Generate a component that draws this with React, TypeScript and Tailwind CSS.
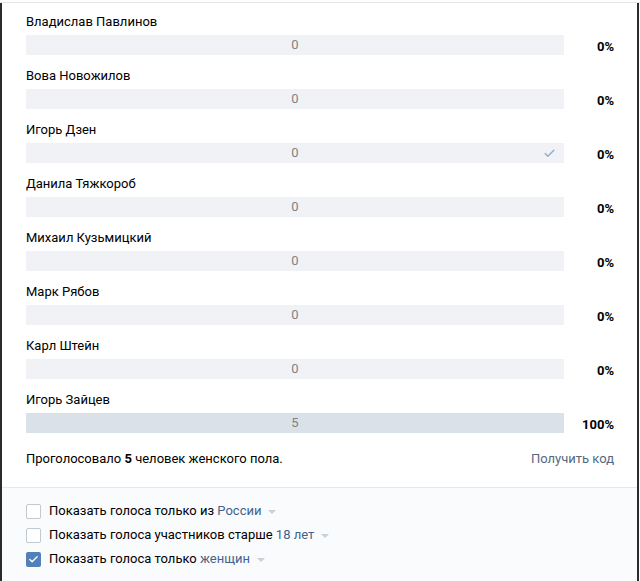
import { Check } from 'lucide-react'

const rows = [
  { name: 'Владислав Павлинов', votes: 0, pct: '0%' },
  { name: 'Вова Новожилов', votes: 0, pct: '0%' },
  { name: 'Игорь Дзен', votes: 0, pct: '0%', mine: true },
  { name: 'Данила Тяжкороб', votes: 0, pct: '0%' },
  { name: 'Михаил Кузьмицкий', votes: 0, pct: '0%' },
  { name: 'Марк Рябов', votes: 0, pct: '0%' },
  { name: 'Карл Штейн', votes: 0, pct: '0%' },
  { name: 'Игорь Зайцев', votes: 5, pct: '100%' },
]

const filters = [
  { pre: 'Показать голоса только из ', link: 'России', checked: false },
  { pre: 'Показать голоса участников старше ', link: '18 лет', checked: false },
  { pre: 'Показать голоса только ', link: 'женщин', checked: true },
]

function Caret() {
  return <span className="ml-[7px] inline-block w-0 h-0 border-x-[4px] border-x-transparent border-t-[4px] border-t-[#c5d0db] align-middle" />
}

export default function App() {
  return (
    <div className="w-[640px] h-[581px] bg-white text-[13px] text-black overflow-hidden" style={{ fontFamily: 'Roboto, "Open Sans", sans-serif' }}>
      <div className="h-[2px]" />
      <div className="h-px bg-[#e3e5e9]" />
      <div className="w-[639px] h-[578px] border-l-2 border-r-2 border-[#2b2b2b] flex flex-col">
        <div className="pl-[24px] pr-[23px] pt-[11px]">
          {rows.map((r, i) => (
            <div key={i} className="h-[54px]">
              <div className="h-4 leading-4">{r.name}</div>
              <div className="flex h-5 mt-[5px]">
                <div className={`relative w-[538px] h-5 flex items-center justify-center ${r.votes > 0 ? 'bg-[#dae1e8]' : 'bg-[#f0f2f5]'}`}>
                  <span className="text-[#828282] leading-5">{r.votes}</span>
                  {r.mine && (
                    <Check className="absolute right-[8px] top-[4px] w-[13px] h-[13px] text-[#8fadc8]" strokeWidth={2.5} />
                  )}
                </div>
                <div className="flex-1 text-right font-bold leading-4 pt-[4px]">{r.pct}</div>
              </div>
            </div>
          ))}
          <div className="flex justify-between h-4 leading-4 mt-[5px] mb-[20px]">
            <span>
              Проголосовало <b>5</b> человек женского пола.
            </span>
            <span className="text-[#55677d]">Получить код</span>
          </div>
        </div>
        <div className="flex-1 border-t border-[#e7e8ec] bg-[#fafbfc] pl-[24px] pt-[11px]">
          {filters.map((f, i) => (
            <div key={i} className="flex items-center h-6">
              {f.checked ? (
                <span className="w-[15px] h-[15px] rounded-[2px] bg-[#5181b8] flex items-center justify-center">
                  <Check className="w-[11px] h-[11px] text-white" strokeWidth={3} />
                </span>
              ) : (
                <span className="w-[15px] h-[15px] rounded-[2px] border border-[#c1c9d1] bg-white" />
              )}
              <span className="ml-[8px]">
                {f.pre}
                <span className="text-[#42648b]">{f.link}</span>
                <Caret />
              </span>
            </div>
          ))}
        </div>
      </div>
    </div>
  )
}
